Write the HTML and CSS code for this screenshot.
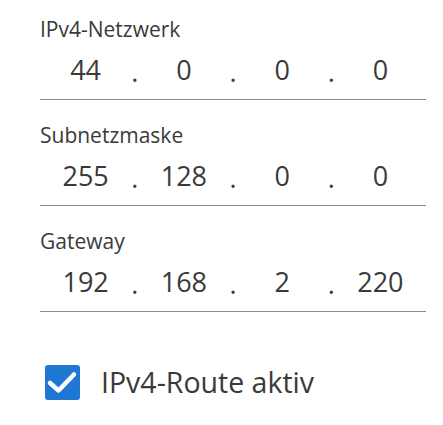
FILE: index.html
```html
<!DOCTYPE html>
<html lang="de">
<head>
    <meta charset="UTF-8">
    <title>IPv4-Route</title>
    <link rel="stylesheet" href="styles.css">
</head>
<body>
    <div class="route-form">
        <div class="field">
            <div class="field-label">IPv4-Netzwerk</div>
            <div class="ip-row">
                <span class="octet">44</span><span class="dot">.</span>
                <span class="octet">0</span><span class="dot">.</span>
                <span class="octet">0</span><span class="dot">.</span>
                <span class="octet">0</span>
            </div>
        </div>
        <div class="field">
            <div class="field-label">Subnetzmaske</div>
            <div class="ip-row">
                <span class="octet">255</span><span class="dot">.</span>
                <span class="octet">128</span><span class="dot">.</span>
                <span class="octet">0</span><span class="dot">.</span>
                <span class="octet">0</span>
            </div>
        </div>
        <div class="field">
            <div class="field-label">Gateway</div>
            <div class="ip-row">
                <span class="octet">192</span><span class="dot">.</span>
                <span class="octet">168</span><span class="dot">.</span>
                <span class="octet">2</span><span class="dot">.</span>
                <span class="octet">220</span>
            </div>
        </div>
        <label class="check-row">
            <span class="checkbox">
                <svg viewBox="0 0 35 35" width="35" height="35">
                    <path d="M5 18 L13.5 25.5 L29 9.5" fill="none" stroke="#ffffff" stroke-width="4.5" stroke-linecap="round" stroke-linejoin="round"/>
                </svg>
            </span>
            <span class="check-text">IPv4-Route aktiv</span>
        </label>
    </div>
</body>
</html>
```

FILE: styles.css
```css
body {
    margin: 0;
    background: #ffffff;
    color: #3a3a3a;
    font-family: 'Open Sans', 'Noto Sans', sans-serif;
}
.route-form {
    padding: 16px 17px 0 40px;
}
.field {
    border-bottom: 1px solid #8a8a8a;
    padding-bottom: 11px;
    margin-bottom: 22px;
}
.field-label {
    font-size: 21px;
    line-height: 27px;
}
.ip-row {
    display: flex;
    align-items: flex-start;
    margin-top: 8px;
    font-size: 27px;
    line-height: 37px;
}
.octet {
    flex: 1;
    text-align: center;
}
.dot {
    width: 7px;
    text-align: center;
    position: relative;
    top: 2px;
}
.check-row {
    display: flex;
    align-items: center;
    gap: 21px;
    margin-top: 50px;
    padding-left: 5px;
}
.checkbox {
    display: block;
    width: 35px;
    height: 35px;
    background: #1e77d3;
    border-radius: 3px;
}
.checkbox svg {
    display: block;
}
.check-text {
    font-size: 28.5px;
    line-height: 40px;
}
```
